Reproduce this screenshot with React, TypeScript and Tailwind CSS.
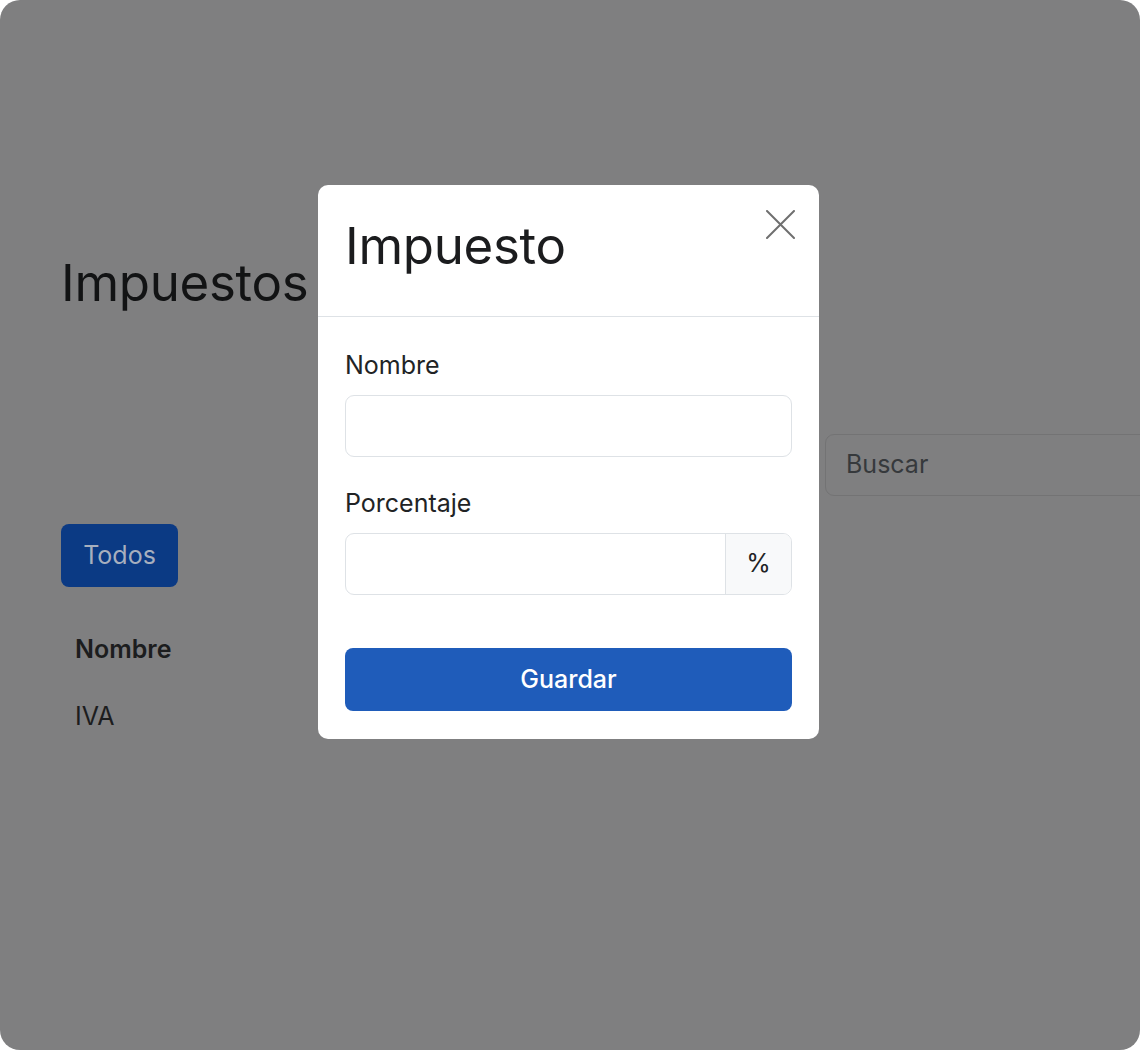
import React from "react";

const font = { fontFamily: "Inter, 'Noto Sans', sans-serif" };

const CloseIcon = () => (
  <svg width="29" height="29" viewBox="0 0 29 29" fill="none">
    <path d="M1 1L28 28M28 1L1 28" stroke="#6f6f6f" strokeWidth="2" strokeLinecap="round" />
  </svg>
);

export default function App() {
  return (
    <div className="w-[1140px] h-[1050px] bg-white" style={font}>
      <div className="relative w-full h-full rounded-[20px] bg-[#7f7f80] overflow-hidden">
        {/* page behind the backdrop */}
        <div className="flex flex-col pl-[61px] pt-[250px]">
          <h1 className="text-[51px] leading-[66px] font-normal text-[#121314] tracking-[-0.3px]">
            Impuestos
          </h1>
          <div className="flex justify-end mt-[118px]">
            <div className="w-[340px] -mr-[25px] h-[62px] shrink-0 rounded-l-[9px] border border-[#737374] flex items-center pl-[20px] text-[25px] text-[#36393c]">
              Buscar
            </div>
          </div>
          <button className="mt-[28px] w-[117px] h-[63px] rounded-[8px] bg-[#0b3a84] text-[25px] text-[#a7afbe]">
            Todos
          </button>
          <table className="mt-[32px] w-[240px] text-left">
            <thead>
              <tr>
                <th className="pl-[14px] h-[62px] text-[25px] font-semibold text-[#1c1d1e]">Nombre</th>
              </tr>
            </thead>
            <tbody>
              <tr>
                <td className="pl-[14px] h-[72px] text-[25px] text-[#1c1d1e]">IVA</td>
              </tr>
            </tbody>
          </table>
        </div>

        {/* modal */}
        <div className="absolute left-[318px] top-[185px] w-[501px] rounded-[10px] bg-white">
          <div className="relative h-[132px] px-[27px] pt-[28px] border-b border-[#dee2e6]">
            <h2 className="text-[51px] leading-[66px] font-normal text-[#1b1c1e] tracking-[-0.3px]">Impuesto</h2>
            <button className="absolute right-[24px] top-[25px]">
              <CloseIcon />
            </button>
          </div>
          <div className="flex flex-col px-[27px] pt-[29px] pb-[28px]">
            <label className="text-[25px] leading-[39px] text-[#212325]">Nombre</label>
            <input className="mt-[10px] h-[62px] rounded-[9px] border border-[#dee2e6] outline-none" />
            <label className="mt-[27px] text-[25px] leading-[39px] text-[#212325]">Porcentaje</label>
            <div className="mt-[10px] flex h-[62px] rounded-[9px] border border-[#dee2e6] overflow-hidden">
              <input className="flex-1 min-w-0 outline-none" />
              <span className="w-[66px] flex items-center justify-center border-l border-[#dee2e6] bg-[#f8f9fa] text-[25px] text-[#212325]">
                %
              </span>
            </div>
            <button className="mt-[53px] h-[63px] rounded-[8px] bg-[#1f5cba] text-[25px] font-medium text-white">
              Guardar
            </button>
          </div>
        </div>
      </div>
    </div>
  );
}
